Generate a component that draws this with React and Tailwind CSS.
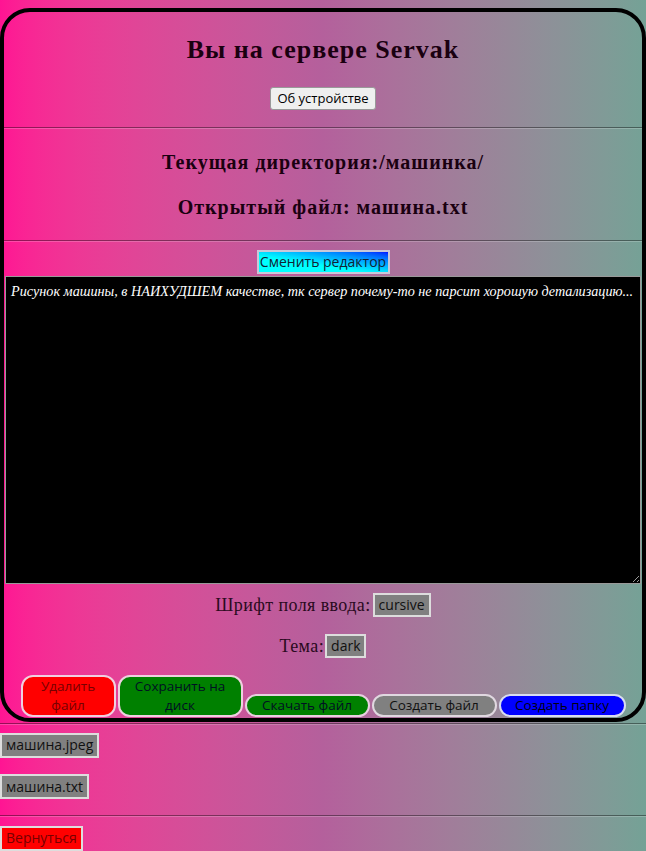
import React from 'react';

const sans = "font-['Open_Sans',sans-serif]";

const Hr = ({ className = '' }) => (
  <hr className={`h-0 border-0 border-t border-b border-t-black/40 border-b-white/20 ${className}`} />
);

export default function App() {
  return (
    <div className="min-h-screen bg-linear-to-r from-[#ff1493] via-[#b4609c] to-[#74a296] pt-2 font-['Liberation_Serif',serif] text-black">
      <div className="rounded-[30px] border-4 border-black pt-6 pb-px">
        <h2 className="text-center text-[26px] font-bold leading-[28px] tracking-[1px] text-[#1a0010]">Вы на сервере Servak</h2>
        <div className="mt-[23px] flex justify-center">
          <button className={`h-[23px] rounded-[3px] border border-[#999] bg-[#efefef] px-[6px] text-[13px] leading-[19px] ${sans}`}>
            Об устройстве
          </button>
        </div>
        <Hr className="mt-[17px]" />
        <h3 className="mt-[21px] text-center text-[20px] font-bold leading-[24px] tracking-[1px] text-[#1a0010]">Текущая директория:/машинка/</h3>
        <h3 className="mt-[21px] text-center text-[20px] font-bold leading-[24px] tracking-[1px] text-[#1a0010]">Открытый файл: машина.txt</h3>
        <Hr className="mt-[21px]" />
        <div className="mt-2 flex justify-center">
          <button className={`h-6 w-[133px] border-2 border-[#c8c8d8] bg-linear-to-tr from-[#00ffff] from-40% to-[#0000ff] text-[14px] leading-[20px] text-[#123] ${sans}`}>
            Сменить редактор
          </button>
        </div>
        <textarea
          className="mx-px mt-[2px] block h-[308px] w-[calc(100%-2px)] resize border border-[#999] bg-black px-[5px] py-[4px] font-['Liberation_Serif',serif] text-[14.2px] italic whitespace-nowrap text-white"
          defaultValue="Рисунок машины, в НАИХУДШЕМ качестве, тк сервер почему-то не парсит хорошую детализацию..."
        />
        <div className="mt-[9px] flex h-6 items-center justify-center text-[18px] leading-6">
          <span className="tracking-[0.4px] text-[#2a0a20]">Шрифт поля ввода:</span>
          <span className={`ml-[2px] h-6 border-2 border-[#ddd] bg-[#808080] px-1 text-[14px] leading-[20px] text-[#111] ${sans}`}>cursive</span>
        </div>
        <div className="mt-[17px] flex h-6 items-center justify-center text-[18px] leading-6">
          <span className="tracking-[0.4px] text-[#2a0a20]">Тема:</span>
          <span className={`ml-px h-6 border-2 border-[#ddd] bg-[#808080] px-1 text-[14px] leading-[20px] text-[#111] ${sans}`}>dark</span>
        </div>
        <div className={`mt-[17px] flex items-end justify-center gap-[2px] text-[13.5px] leading-[19px] ${sans}`}>
          <button className="w-[95px] rounded-[12px] border-2 border-[#f0d0e0] bg-[#ff0000] text-[#700]">
            Удалить<br />файл
          </button>
          <button className="w-[125px] rounded-[12px] border-2 border-[#f0d0e0] bg-[#008000] text-[#012]">
            Сохранить на<br />диск
          </button>
          <button className="w-[125px] rounded-[12px] border-2 border-[#e8d0e0] bg-[#008000] text-[#012]">
            Скачать файл
          </button>
          <button className="w-[125px] rounded-[12px] border-2 border-[#e0d8e0] bg-[#808080] text-[#111]">
            Создать файл
          </button>
          <button className="w-[127px] rounded-[12px] border-2 border-[#d8dcf0] bg-[#0000ff] text-[#001]">
            Создать папку
          </button>
        </div>
      </div>
      <Hr className="mt-px" />
      <div className={`mt-[7px] ${sans}`}>
        <button className="h-[25px] border-2 border-[#ddd] bg-[#808080] px-1 text-[14px] leading-[20px] text-[#111]">
          машина.jpeg
        </button>
      </div>
      <div className={`mt-4 ${sans}`}>
        <button className="h-[25px] border-2 border-[#ddd] bg-[#808080] px-1 text-[14px] leading-[20px] text-[#111]">
          машина.txt
        </button>
      </div>
      <Hr className="mt-4" />
      <div className={`mt-[8px] ${sans}`}>
        <button className="h-[25px] border-2 border-[#ddd] bg-[#ff0000] px-1 text-[14px] leading-[20px] text-[#700]">
          Вернуться
        </button>
      </div>
    </div>
  );
}
